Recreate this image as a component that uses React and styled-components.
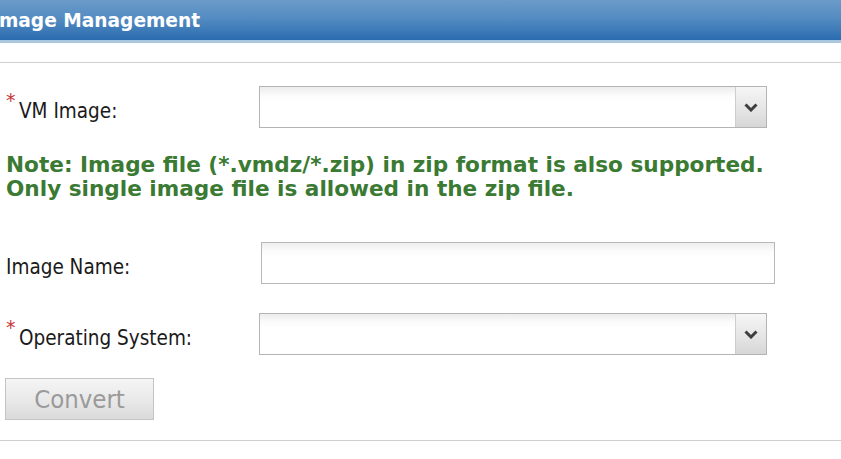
import styled, { createGlobalStyle } from "styled-components";

const GlobalStyle = createGlobalStyle`
  html, body {
    margin: 0;
    padding: 0;
    background: #ffffff;
  }
  body {
    font-family: "DejaVu Sans Condensed", "DejaVu Sans", Verdana, sans-serif;
    overflow: hidden;
  }
`

const Page = styled.div`
  width: 841px;
  height: 459px;
  overflow: hidden;
`

const Header = styled.div`
  height: 40px;
  border-bottom: 3px solid #a9c7df;
  background: linear-gradient(to bottom, #6b9bc9 0%, #548cc2 45%, #2a6baf 100%);
  display: flex;
  align-items: center;
  overflow: hidden;
`

const Title = styled.h1`
  margin: 0 0 0 -8px;
  font-family: "DejaVu Sans", Verdana, sans-serif;
  font-size: 18.6px;
  font-weight: bold;
  color: #ffffff;
  white-space: nowrap;
`

const Divider = styled.div`
  height: 1px;
  background: #cfcfcf;
  margin-top: ${props => props.top}px;
`

const Form = styled.div`
  display: flex;
  flex-direction: column;
  padding: 0 0 0 6px;
`

const Row = styled.div`
  display: grid;
  grid-template-columns: 253px 1fr;
  align-items: center;
  margin-top: ${props => props.top}px;
`

const Label = styled.label`
  position: relative;
  top: 4px;
  font-size: 20.5px;
  color: #1a1a1a;
  padding-left: ${props => (props.required ? 13 : 0)}px;
`

const Star = styled.span`
  position: absolute;
  left: 0;
  top: -10px;
  color: #c8383a;
  font-family: "DejaVu Sans", sans-serif;
  font-size: 19px;
`

const SelectBox = styled.div`
  width: 506px;
  height: 40px;
  display: flex;
  border: 1px solid #b4b4b4;
  background: linear-gradient(to bottom, #ececec 0px, #fbfbfb 8px, #ffffff 14px);
`

const SelectValue = styled.div`
  flex: 1;
`

const ArrowButton = styled.div`
  width: 30px;
  border-left: 1px solid #cdcdcd;
  background: linear-gradient(to bottom, #f6f6f6 0%, #e4e4e4 60%, #d6d6d6 100%);
  display: flex;
  align-items: center;
  justify-content: center;
`

const TextInput = styled.div`
  width: 512px;
  height: 40px;
  margin-left: 2px;
  border: 1px solid #b8b8b8;
  background: linear-gradient(to bottom, #eeeeee 0px, #fbfbfb 8px, #ffffff 14px);
`

const Note = styled.p`
  margin: 25px 0 0 0;
  font-family: "DejaVu Sans", Verdana, sans-serif;
  font-size: 21.6px;
  font-weight: bold;
  line-height: 24px;
  color: #3a7a33;
  white-space: nowrap;
`

const Button = styled.button`
  width: 149px;
  height: 42px;
  margin-top: 23px;
  margin-left: -1px;
  border: 1px solid #c4c4c4;
  background: linear-gradient(to bottom, #f5f5f5 0%, #e8e8e8 55%, #dadada 100%);
  color: #9a9a9a;
  font-family: "DejaVu Sans Condensed", "DejaVu Sans", Verdana, sans-serif;
  font-size: 25.5px;
  padding: 0;
  cursor: default;
`

const Chevron = () => (
  <svg width="14" height="9" viewBox="0 0 14 9">
    <path d="M1.5 1.5 L7 7 L12.5 1.5" fill="none" stroke="#3e3e3e" strokeWidth="3" />
  </svg>
)

const Select = () => (
  <SelectBox>
    <SelectValue />
    <ArrowButton>
      <Chevron />
    </ArrowButton>
  </SelectBox>
)

const App = () => {
  return (
    <Page>
      <GlobalStyle />
      <Header>
        <Title>Image Management</Title>
      </Header>
      <Divider top={19} />
      <Form>
        <Row top={23}>
          <Label required>
            <Star>*</Star>VM Image:
          </Label>
          <Select />
        </Row>
        <Note>
          Note: Image file (*.vmdz/*.zip) in zip format is also supported.
          <br />
          Only single image file is allowed in the zip file.
        </Note>
        <Row top={41}>
          <Label>Image Name:</Label>
          <TextInput />
        </Row>
        <Row top={29}>
          <Label required>
            <Star>*</Star>Operating System:
          </Label>
          <Select />
        </Row>
        <Button>Convert</Button>
      </Form>
      <Divider top={20} />
    </Page>
  )
}

export default App
